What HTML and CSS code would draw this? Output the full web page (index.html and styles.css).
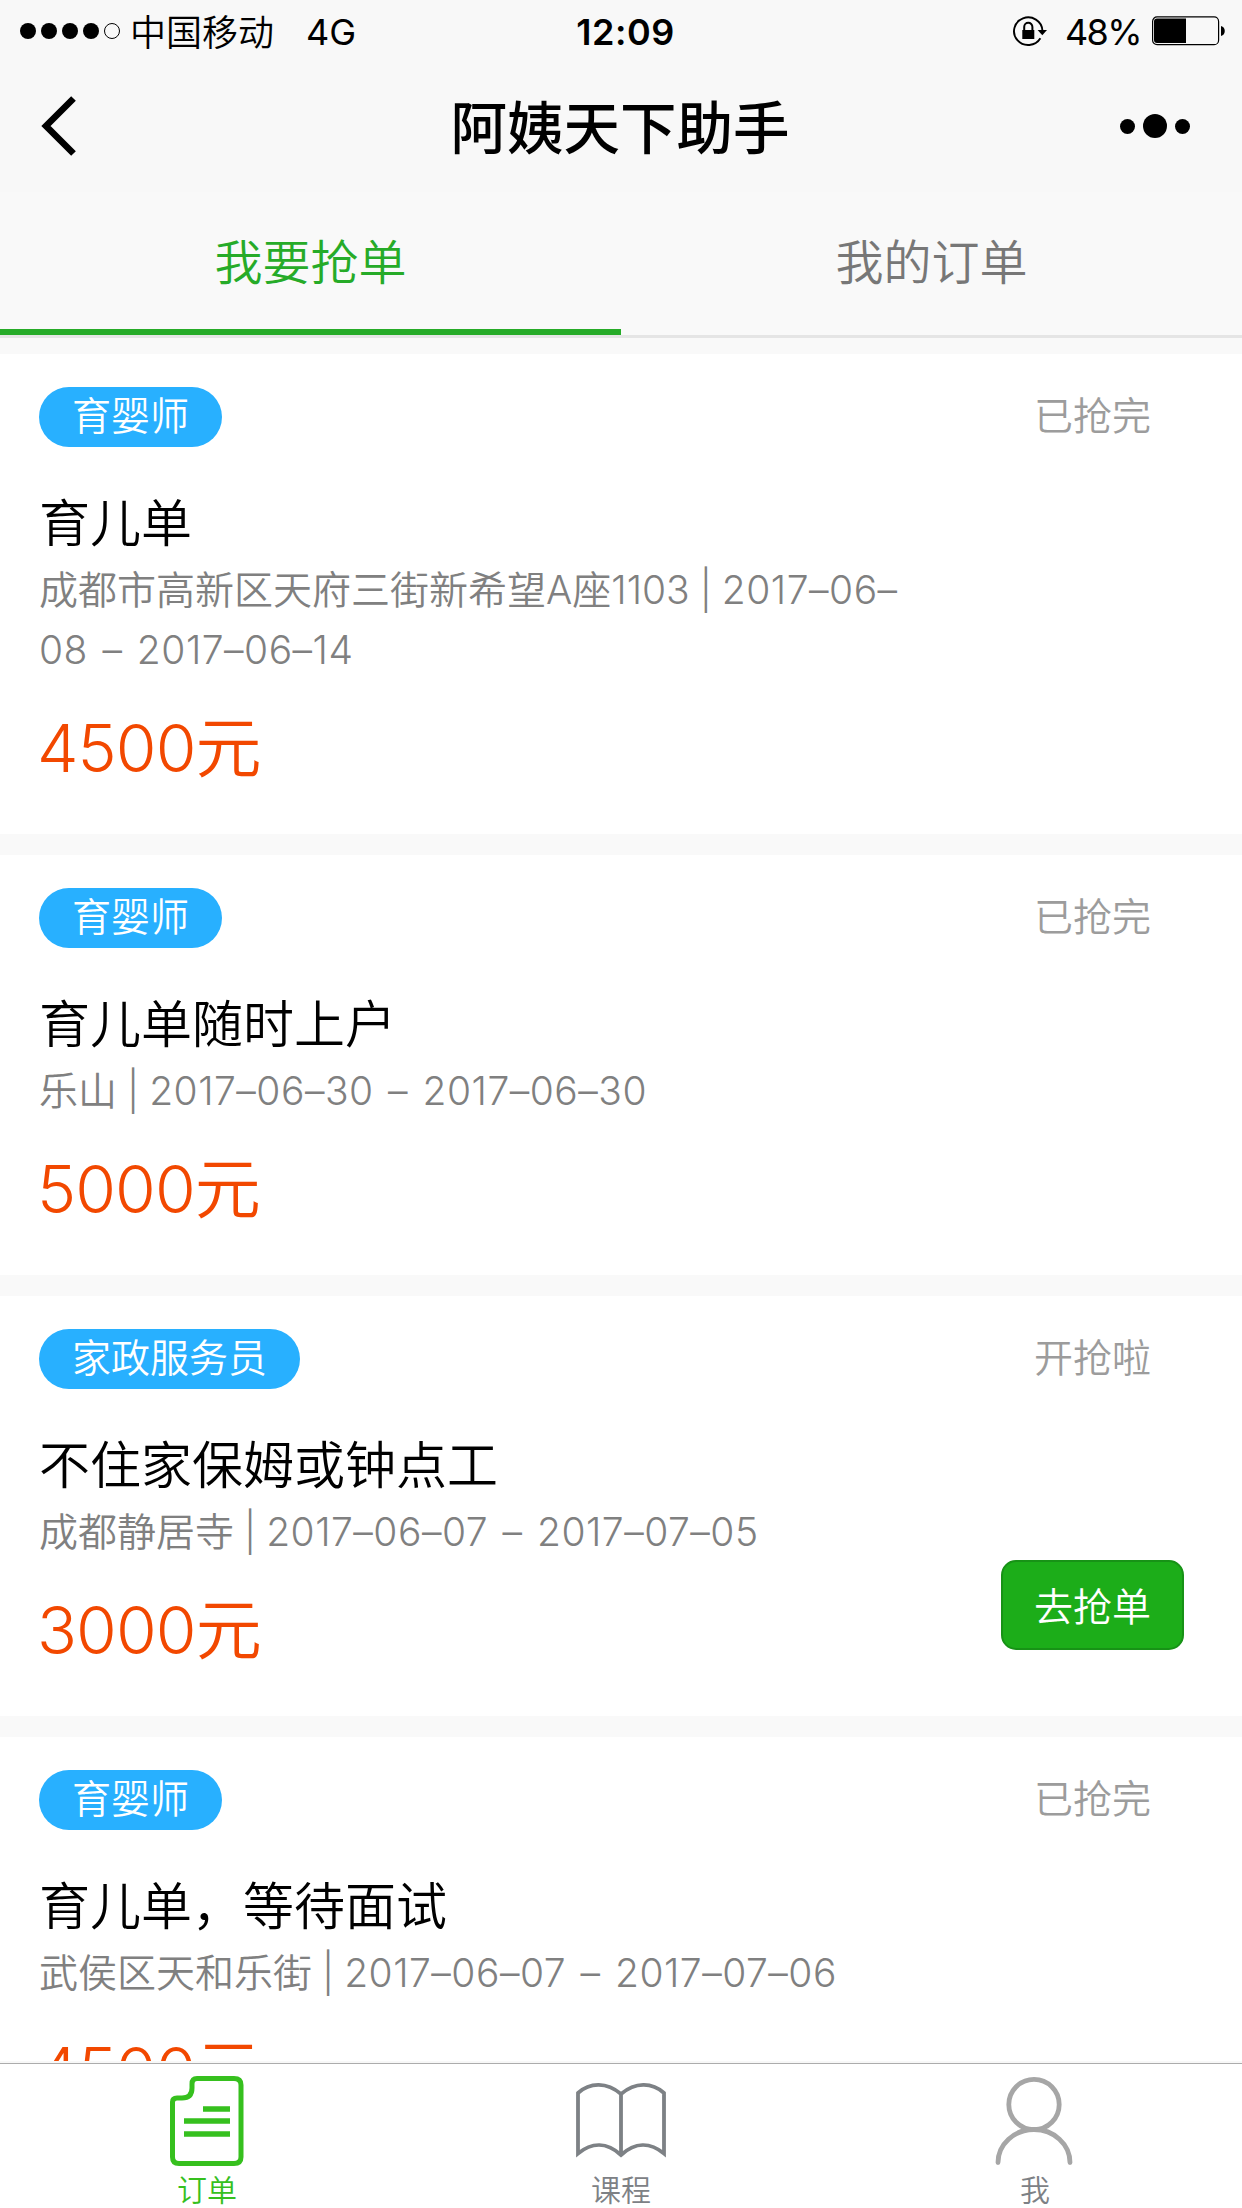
FILE: index.html
```html
<!DOCTYPE html>
<html lang="zh-CN">
<head>
  <meta charset="UTF-8" />
  <meta name="viewport" content="width=device-width, initial-scale=1.0"/>
  <title>阿姨天下助手</title>
  <link rel="stylesheet" href="styles.css">
</head>
<body>

  <header class="header">
    <div class="status-bar">
      <div class="status-left">
        <div class="signal">
          <i></i><i></i><i></i><i></i><i class="empty"></i>
        </div>
        <span class="carrier">中国移动</span>
        <span class="network">4G</span>
      </div>
      <span class="time">12:09</span>
      <div class="status-right">
        <svg class="lock" width="34" height="30" viewBox="0 0 34 30">
          <path d="M27.400 22.300A14.200 13.800 0 1 1 29.400 14.500" fill="none" stroke="#000" stroke-width="1.900"/>
          <path d="M24.600 14h9.400l-4.700 5.200z"/>
          <path d="M9.300 14h12v9h-12z"/>
          <path d="M11.200 14.500v-3.600a4.100 4.100 0 0 1 8.200 0v3.600" fill="none" stroke="#000" stroke-width="2"/>
        </svg>
        <span class="percent">48%</span>
        <svg class="battery" width="74" height="30" viewBox="0 0 74 30">
          <rect x="0.600" y="0.900" width="66" height="27.800" rx="4.500" fill="none" stroke="#000" stroke-width="1.200"/>
          <path d="M5 2.500h29v24.600H5a3 3 0 0 1-3-3V5.500a3 3 0 0 1 3-3z"/>
          <path d="M69 10c5 1 5 9 0 10z"/>
        </svg>
      </div>
    </div>
    <div class="nav">
      <svg class="back" width="36" height="60" viewBox="0 0 36 60">
        <path d="M32.500 2.500L5 30L32.500 57.500" fill="none" stroke="#000" stroke-width="6.600"/>
      </svg>
      <h1>阿姨天下助手</h1>
      <div class="more"><i></i><i class="big"></i><i></i></div>
    </div>
  </header>

  <div class="tabs">
    <div class="tab active">我要抢单</div>
    <div class="tab">我的订单</div>
  </div>

  <div class="list">
    <div class="card">
      <div class="info">
        <span class="tag">育婴师</span>
        <h2>育儿单</h2>
        <p class="desc">成都市高新区天府三街新希望<span class="num">A</span>座<span class="num">1103 | </span><span class="date">2017–06–08 – 2017–06–14</span></p>
        <div class="price"><span>4500</span>元</div>
      </div>
      <div class="side"><span class="state">已抢完</span></div>
    </div>

    <div class="card">
      <div class="info">
        <span class="tag">育婴师</span>
        <h2>育儿单随时上户</h2>
        <p class="desc">乐山<span class="num"> | </span><span class="date">2017–06–30 – 2017–06–30</span></p>
        <div class="price"><span>5000</span>元</div>
      </div>
      <div class="side"><span class="state">已抢完</span></div>
    </div>

    <div class="card">
      <div class="info">
        <span class="tag">家政服务员</span>
        <h2>不住家保姆或钟点工</h2>
        <p class="desc">成都静居寺<span class="num"> | </span><span class="date">2017–06–07 – 2017–07–05</span></p>
        <div class="price"><span>3000</span>元</div>
      </div>
      <div class="side">
        <span class="state">开抢啦</span>
        <button class="btn">去抢单</button>
      </div>
    </div>

    <div class="card">
      <div class="info">
        <span class="tag">育婴师</span>
        <h2>育儿单，等待面试</h2>
        <p class="desc">武侯区天和乐街<span class="num"> | </span><span class="date">2017–06–07 – 2017–07–06</span></p>
        <div class="price"><span>4500</span>元</div>
      </div>
      <div class="side"><span class="state">已抢完</span></div>
    </div>
  </div>

  <footer class="tabbar">
    <div class="item active">
      <svg width="90" height="90" viewBox="0 0 90 90" fill="none" stroke="#36c01e">
        <path d="M35 2.500H72Q79 2.500 79 9V81Q79 87.500 72 87.500H17Q10.500 87.500 10.500 81V26Q10.500 22 15 22H20C27 22 30 18 30 12V8Q30 2.500 35 2.500Z" stroke-width="5"/>
        <path d="M41 33H68M22 45H68M22 58H68" stroke-width="5.400"/>
      </svg>
      <span>订单</span>
    </div>
    <div class="item">
      <svg width="90" height="90" viewBox="0 0 90 90" fill="none" stroke="#7d8185" stroke-width="3.800">
        <path d="M2 77.500V17C14 6 31 6 45 18C59 6 76 6 88 17V77.500C74 66 59 66 45 79C31 66 16 66 2 77.500ZM45 18V79"/>
      </svg>
      <span>课程</span>
    </div>
    <div class="item">
      <svg width="90" height="90" viewBox="0 0 90 90" fill="none" stroke="#a6a6a6" stroke-width="4.800" stroke-linecap="round">
        <circle cx="44" cy="28.500" r="25.200"/>
        <path d="M8 86.500A36 33 0 0 1 80 86.500"/>
      </svg>
      <span>我</span>
    </div>
  </footer>

</body>
</html>
```

FILE: styles.css
```css
* {
  box-sizing: border-box;
  margin: 0;
  padding: 0;
}

body {
  width: 1242px;
  height: 2208px;
  display: flex;
  flex-direction: column;
  overflow: hidden;
  font-family: 'Noto Sans CJK SC', sans-serif;
  font-weight: 350;
  background: #f9f9f9;
  color: #000;
}

/* status bar + nav */
.header {
  height: 192px;
  background: #f8f8f8;
}

.status-bar {
  display: grid;
  grid-template-columns: 1fr auto 1fr;
  height: 60px;
  align-items: center;
  padding: 0 16px 0 20px;
  font-size: 36px;
  line-height: 60px;
}

.status-left,
.status-right {
  display: flex;
  align-items: center;
}

.status-right {
  justify-content: flex-end;
}

.signal {
  display: flex;
  gap: 5px;
  margin-right: 10px;
}

.signal i {
  width: 16px;
  height: 16px;
  border-radius: 50%;
  background: #000;
}

.signal .empty {
  background: none;
  border: 1px solid #000;
}

.carrier {
  padding-bottom: 2px;
}

.network,
.time,
.percent {
  font-family: Inter, sans-serif;
  font-weight: 400;
  padding-top: 1px;
}

.network {
  margin-left: 32px;
}

.time {
  font-weight: 600;
  letter-spacing: 0.5px;
  padding-left: 5px;
}

.lock {
  margin-right: 18px;
}

.percent {
  letter-spacing: -1.6px;
  margin-right: 11px;
}

.nav {
  display: grid;
  grid-template-columns: 1fr auto 1fr;
  align-items: center;
  height: 132px;
  padding: 0 52px 0 41px;
}

.nav h1 {
  font-size: 56.5px;
  font-weight: 500;
  line-height: 80px;
  padding: 0 0 5px 9px;
}

.more {
  display: flex;
  align-items: center;
  justify-content: flex-end;
  gap: 8px;
}

.more i {
  width: 15px;
  height: 15px;
  border-radius: 50%;
  background: #000;
}

.more .big {
  width: 24px;
  height: 24px;
}

/* top tabs */
.tabs {
  display: flex;
  height: 146px;
  border-bottom: 3px solid #e5e5e5;
}

.tab {
  flex: 1;
  text-align: center;
  font-size: 48px;
  line-height: 134px;
  color: #777;
}

.tab.active {
  color: #26ab28;
  border-bottom: 6px solid #26ab28;
}

/* order list */
.list {
  flex: 1;
  min-height: 0;
  padding-top: 16px;
  overflow: hidden;
}

.card {
  display: flex;
  justify-content: space-between;
  background: #fff;
  margin-bottom: 21px;
  padding: 33px 58px 44px 39px;
}

.info {
  width: 880px;
}

.tag {
  display: block;
  width: fit-content;
  height: 60px;
  padding: 0 33px;
  border-radius: 30px;
  background: #28b0ff;
  color: #fff;
  font-size: 39px;
  line-height: 53px;
}

.info h2 {
  margin-top: 36px;
  font-size: 51px;
  font-weight: 350;
  line-height: 74px;
}

.desc {
  font-size: 39px;
  line-height: 60px;
  color: #808080;
}

.num,
.date,
.price span {
  font-family: Inter, sans-serif;
  font-weight: 350;
  line-height: 1;
}

.num {
  word-spacing: -1px;
}

.date {
  letter-spacing: 0.5px;
  word-spacing: 3px;
}

.price {
  margin-top: 20px;
  font-size: 66px;
  line-height: 93px;
  color: #f24800;
}

.price span {
  letter-spacing: -0.9px;
  margin-left: -2px;
}

.side {
  display: flex;
  flex-direction: column;
  align-items: center;
  justify-content: space-between;
  width: 183px;
  padding-bottom: 22px;
}

.state {
  font-size: 39px;
  line-height: 53px;
  color: #9c9c9c;
}

.btn {
  width: 183px;
  height: 90px;
  padding-bottom: 3px;
  border: 2px solid #179216;
  border-radius: 15px;
  background: #1cad19;
  color: #fff;
  font-family: inherit;
  font-size: 39px;
  font-weight: 350;
}

/* bottom tab bar */
.tabbar {
  display: flex;
  height: 147px;
  border-top: 2px solid #f8f8f8;
  background: #fff;
  box-shadow: inset 0 1px #acacac;
}

.item {
  flex: 1;
  display: flex;
  flex-direction: column;
  align-items: center;
  padding-top: 13px;
  color: #7d8185;
}

.item svg {
  flex-shrink: 0;
}

.item span {
  font-size: 30px;
  line-height: 45px;
}

.item.active {
  color: #36c01e;
}
```
